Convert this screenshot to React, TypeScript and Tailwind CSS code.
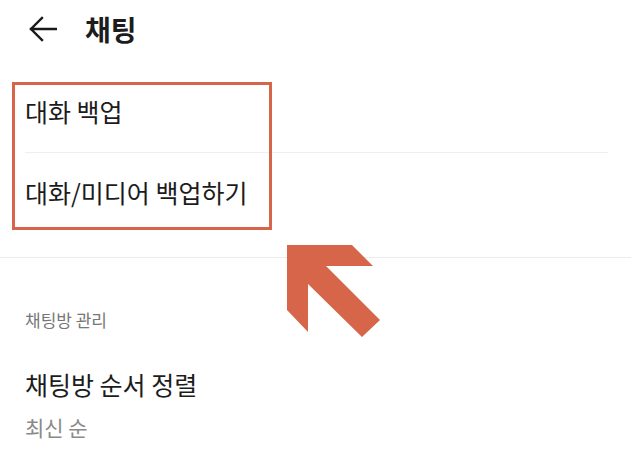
import React from "react";

export default function App() {
  const font = { fontFamily: '"Noto Sans CJK KR", "Noto Sans", sans-serif' };
  return (
    <div className="relative w-[631px] h-[451px] bg-white overflow-hidden" style={font}>
      <div className="flex items-center h-[58px] pl-[29px]">
        <svg width="28" height="26" viewBox="0 0 28 26" className="shrink-0">
          <path d="M2 13 H27 M13 2 L2 13 L13 24" fill="none" stroke="#1a1a1a" strokeWidth="2.4" strokeLinecap="square" />
        </svg>
        <span className="ml-[28px] text-[28px] font-bold text-[#1c1c1c] leading-none">채팅</span>
      </div>
      <div className="pt-[14px] pb-[24px]">
        <div className="h-[80px] flex items-center pl-[25px] text-[25px] text-[#1c1c1c]">대화 백업</div>
        <div className="mx-[25px] mr-[23px] h-px bg-[#efefef]" />
        <div className="h-[80px] flex items-center pl-[25px] text-[25px] text-[#1c1c1c]">대화/미디어 백업하기</div>
      </div>
      <div className="h-px bg-[#ececec]" />
      <div className="pt-[53px] pl-[25px]">
        <div className="text-[17px] text-[#777] leading-none">채팅방 관리</div>
        <div className="mt-[44px] text-[25px] text-[#1c1c1c] leading-none">채팅방 순서 정렬</div>
        <div className="mt-[20px] text-[21px] text-[#8a8a8a] leading-none">최신 순</div>
      </div>
      <div className="absolute left-[12px] top-[82px] w-[260px] h-[148px] border-[3.5px] border-[#d6654a]" />
      <svg className="absolute left-0 top-0" width="631" height="451">
        <polygon
          points="287,245 352,245 373,266 326,266 380,320 362,337 308,284 308,332 287,310"
          fill="#d6654a"
        />
      </svg>
    </div>
  );
}
